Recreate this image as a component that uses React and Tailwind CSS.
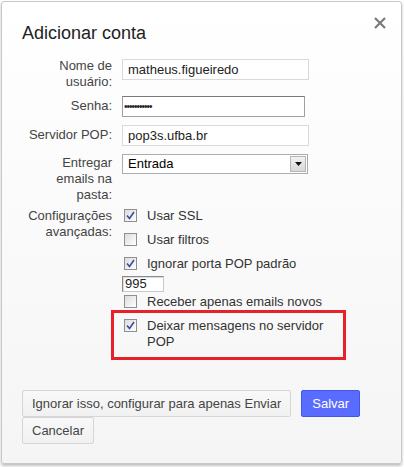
import React from 'react';

const font = { fontFamily: '"Liberation Sans", Arial, sans-serif' };

function Check({ checked }) {
  return (
    <span className="mt-[1px] ml-[2px] mr-[10px] flex h-[13px] w-[13px] shrink-0 items-center justify-center border border-[#8e8f8f] bg-gradient-to-br from-[#dcdcdc] to-white">
      {checked && (
        <svg width="9" height="9" viewBox="0 0 9 9">
          <path d="M1 4.5 L3.5 7.5 L8 1" fill="none" stroke="#3a4a9a" strokeWidth="1.6" />
        </svg>
      )}
    </span>
  );
}

function CheckRow({ checked, children, className = '' }) {
  return (
    <div className={`flex items-start text-[13px] leading-4 text-[#333] ${className}`}>
      <Check checked={checked} />
      <span className="max-w-[185px]">{children}</span>
    </div>
  );
}

function Label({ children, className = '' }) {
  return (
    <div className={`w-[90px] shrink-0 text-right text-[13px] leading-4 text-[#444] ${className}`}>
      {children}
    </div>
  );
}

function Button({ children, primary }) {
  return primary ? (
    <button className="mr-[10px] h-[27px] rounded-[2px] border border-[#3f58e8] bg-[#5a6cff] px-[10px] text-[13px] text-white">
      {children}
    </button>
  ) : (
    <button className="mr-[10px] h-[27px] rounded-[2px] border border-[#d6d6d6] bg-gradient-to-b from-[#f8f8f8] to-[#f1f1f1] px-[9px] text-[13px] text-[#444]">
      {children}
    </button>
  );
}

export default function App() {
  return (
    <div className="h-[467px] w-[404px] bg-white" style={font}>
      <div className="relative ml-px mt-px h-[463px] w-[401px] rounded-[3px] border border-[#c8c8c8] bg-gradient-to-b from-white to-[#f5f5f5] px-5 pt-[21px] shadow-[0_2px_3px_rgba(0,0,0,0.25)]">
        {/* close */}
        <svg className="absolute right-[15px] top-[15px]" width="12" height="12" viewBox="0 0 12 12">
          <path d="M1 1 L11 11 M11 1 L1 11" stroke="#7a7a7a" strokeWidth="2.2" />
        </svg>

        <h1 className="text-[18px] leading-[21px] text-[#222]">Adicionar conta</h1>

        {/* Nome de usuário */}
        <div className="mt-[14px] flex gap-[10px]">
          <Label>Nome de<br />usuário:</Label>
          <input
            readOnly
            value="matheus.figueiredo"
            className="mt-px h-[21px] w-[187px] border border-[#d9d9d9] bg-white px-[5px] text-[13px] text-[#222] outline-none"
          />
        </div>

        {/* Senha */}
        <div className="mt-[6px] flex gap-[10px]">
          <Label className="pt-[2px]">Senha:</Label>
          <input
            readOnly
            type="password"
            value="abcdefghijk"
            className="h-[21px] w-[183px] border border-[#a0a0a0] border-t-[#7a7a7a] bg-white px-[1px] text-[10px] tracking-[-1px] text-[#222] outline-none"
          />
        </div>

        {/* Servidor POP */}
        <div className="mt-[8px] flex gap-[10px]">
          <Label className="pt-[2px]">Servidor POP:</Label>
          <input
            readOnly
            value="pop3s.ufba.br"
            className="h-[21px] w-[187px] border border-[#d9d9d9] bg-white px-[5px] text-[13px] text-[#222] outline-none"
          />
        </div>

        {/* Entregar */}
        <div className="mt-[8px] flex gap-[10px]">
          <Label className="pt-px">Entregar<br />emails na<br />pasta:</Label>
          <div className="flex h-[20px] w-[186px] items-center border border-[#a5acb2] bg-white">
            <span className="flex-1 pl-[5px] text-[13px] text-black">Entrada</span>
            <span className="mr-px flex h-[16px] w-[16px] items-center justify-center border border-[#b5b5b5] bg-gradient-to-b from-[#f2f2f2] to-[#d8d8d8]">
              <svg width="7" height="4" viewBox="0 0 7 4">
                <path d="M0 0 H7 L3.5 4 Z" fill="#111" />
              </svg>
            </span>
          </div>
        </div>

        {/* Configurações */}
        <div className="mt-[5px] flex gap-[10px]">
          <Label>Configurações<br />avançadas:</Label>
          <div className="flex flex-col">
            <CheckRow checked>Usar SSL</CheckRow>
            <CheckRow className="mt-2">Usar filtros</CheckRow>
            <CheckRow checked className="mt-2">Ignorar porta POP padrão</CheckRow>
            <input
              readOnly
              value="995"
              className="mt-[4px] h-[16px] w-[42px] border border-[#c8c8c8] border-l-[#8a8a8a] border-t-[#8a8a8a] bg-white px-[2px] text-[13px] leading-4 text-[#222] outline-none shadow-[inset_1px_1px_1px_rgba(0,0,0,0.15)]"
            />
            <CheckRow className="mt-[2px]">Receber apenas emails novos</CheckRow>
            <div className="relative mt-2">
              <CheckRow checked>Deixar mensagens no servidor POP</CheckRow>
              <div className="absolute -left-[11px] -top-[8px] h-[50px] w-[235px] border-[3px] border-[#e8202a]" />
            </div>
          </div>
        </div>

        {/* buttons */}
        <div className="mt-[40px] flex w-[360px] flex-wrap">
          <Button>Ignorar isso, configurar para apenas Enviar</Button>
          <Button primary>Salvar</Button>
          <Button>Cancelar</Button>
        </div>
      </div>
    </div>
  );
}
